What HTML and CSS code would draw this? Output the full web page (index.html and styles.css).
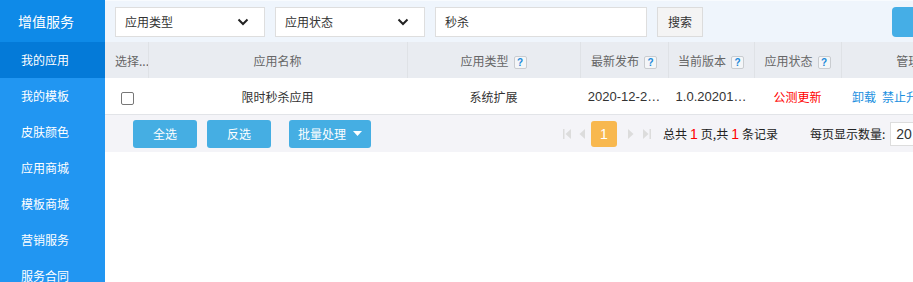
FILE: index.html
```html
<!DOCTYPE html>
<html lang="zh">
<head>
<meta charset="utf-8">
<title>增值服务</title>
<link rel="stylesheet" href="styles.css">
</head>
<body>
<div class="page">
  <aside class="sidebar">
    <div class="side-title">增值服务</div>
    <div class="side-item active">我的应用</div>
    <div class="side-item">我的模板</div>
    <div class="side-item">皮肤颜色</div>
    <div class="side-item">应用商城</div>
    <div class="side-item">模板商城</div>
    <div class="side-item">营销服务</div>
    <div class="side-item">服务合同</div>
  </aside>
  <main class="main">
    <div class="filters">
      <div class="select"><span>应用类型</span><svg class="chev" width="12" height="8" viewBox="0 0 12 8"><path d="M1.5 1.5 L6 6 L10.5 1.5" fill="none" stroke="#222" stroke-width="2"/></svg></div>
      <div class="select"><span>应用状态</span><svg class="chev" width="12" height="8" viewBox="0 0 12 8"><path d="M1.5 1.5 L6 6 L10.5 1.5" fill="none" stroke="#222" stroke-width="2"/></svg></div>
      <div class="search-input">秒杀</div>
      <div class="search-btn">搜索</div>
      <div class="add-btn">添加应用</div>
    </div>
    <table class="grid">
      <colgroup>
        <col class="c-sel"><col class="c-name"><col class="c-type"><col class="c-date"><col class="c-ver"><col class="c-status"><col class="c-manage">
      </colgroup>
      <thead>
        <tr>
          <th class="th-sel">选择...</th>
          <th>应用名称</th>
          <th>应用类型<span class="q">?</span></th>
          <th>最新发布<span class="q">?</span></th>
          <th>当前版本<span class="q">?</span></th>
          <th>应用状态<span class="q">?</span></th>
          <th>管理</th>
        </tr>
      </thead>
      <tbody>
        <tr>
          <td><span class="checkbox"></span></td>
          <td>限时秒杀应用</td>
          <td>系统扩展</td>
          <td class="num">2020-12-2…</td>
          <td class="num">1.0.20201…</td>
          <td class="red">公测更新</td>
          <td class="links"><a>卸载</a><a>禁止升级</a></td>
        </tr>
      </tbody>
    </table>
    <div class="footer">
      <div class="btn">全选</div>
      <div class="btn">反选</div>
      <div class="btn batch">批量处理<svg width="9" height="5" viewBox="0 0 9 5"><path d="M0 0 L9 0 L4.5 5 Z" fill="#fff"/></svg></div>
      <div class="pager">
        <svg class="pi first" width="10" height="12" viewBox="0 0 10 12"><rect x="1" y="1" width="1.5" height="10" fill="#dcdcdc"/><path d="M9 1 L3.5 6 L9 11 Z" fill="#dcdcdc"/></svg>
        <svg class="pi prev" width="8" height="12" viewBox="0 0 8 12"><path d="M7 1 L1.5 6 L7 11 Z" fill="#dcdcdc"/></svg>
        <span class="page-num">1</span>
        <svg class="pi next" width="8" height="12" viewBox="0 0 8 12"><path d="M1 1 L6.5 6 L1 11 Z" fill="#dcdcdc"/></svg>
        <svg class="pi last" width="10" height="12" viewBox="0 0 10 12"><path d="M1 1 L6.5 6 L1 11 Z" fill="#dcdcdc"/><rect x="7.5" y="1" width="1.5" height="10" fill="#dcdcdc"/></svg>
        <span class="total">总共<b>1</b>页,共<b>1</b>条记录</span>
        <span class="per">每页显示数量:</span>
        <span class="per-input">20</span>
      </div>
    </div>
  </main>
</div>
</body>
</html>
```

FILE: styles.css
```css
html, body {
  margin: 0;
  padding: 0;
  overflow: hidden;
  background: #fff;
}
body {
  font-family: "Noto Sans CJK SC", "Liberation Sans", sans-serif;
  font-size: 12px;
  color: #333;
}
.page {
  display: flex;
  width: 1100px;
  min-height: 282px;
}
.sidebar {
  width: 105px;
  flex: none;
  background: #2196f2;
  color: #fff;
  min-height: 300px;
}
.side-title {
  height: 42px;
  line-height: 42px;
  padding-left: 18px;
  font-size: 14px;
  background: #0e8ae8;
}
.side-item {
  height: 36px;
  line-height: 36px;
  padding-left: 21px;
  font-size: 12px;
}
.side-item.active {
  background: #047ad8;
}
.main {
  flex: 1;
  display: flex;
  flex-direction: column;
}
.filters {
  height: 42px;
  box-sizing: border-box;
  border-top: 1px solid #f8fbfe;
  background: #eff5fc;
  display: flex;
  align-items: center;
  padding-left: 10px;
  gap: 10px;
}
.select, .search-input {
  height: 30px;
  box-sizing: border-box;
  background: #fff;
  border: 1px solid #dedede;
  display: flex;
  align-items: center;
  padding-left: 9px;
  color: #333;
}
.select {
  width: 150px;
  justify-content: space-between;
  padding-right: 15px;
}
.chev { flex: none; }
.search-input {
  width: 212px;
}
.search-btn {
  width: 46px;
  height: 30px;
  box-sizing: border-box;
  border: 1px solid #dcdcdc;
  background: #f4f4f4;
  display: flex;
  align-items: center;
  justify-content: center;
  color: #333;
}
.add-btn {
  margin-left: 179px;
  height: 30px;
  width: 90px;
  border-radius: 4px;
  background: #45aee6;
  color: #fff;
  display: flex;
  align-items: center;
  justify-content: center;
}
.grid {
  border-collapse: collapse;
  table-layout: fixed;
  width: 870px;
}
.c-sel { width: 43px; }
.c-name { width: 259px; }
.c-type { width: 173px; }
.c-date { width: 88px; }
.c-ver { width: 86px; }
.c-status { width: 87px; }
.c-manage { width: 134px; }
.grid th {
  height: 36px;
  padding: 0;
  background: #e9ecf1;
  color: #666;
  font-weight: normal;
  text-align: center;
  border-left: 1px solid #dfe2e6;
  white-space: nowrap;
  overflow: hidden;
}
.grid th.th-sel {
  border-left: none;
  text-align: left;
  padding-left: 10px;
}
.q {
  display: inline-block;
  width: 11px;
  height: 11px;
  line-height: 11px;
  margin-left: 5px;
  border: 1px solid #c9ccd0;
  border-radius: 2px;
  background: #f4f6f8;
  color: #1a88d8;
  font-family: "Liberation Sans", sans-serif;
  font-weight: bold;
  font-size: 10px;
  text-align: center;
  vertical-align: 0;
}
.grid td {
  height: 36px;
  padding: 0;
  background: #fff;
  text-align: center;
  border-bottom: 1px solid #e2e4e8;
  white-space: nowrap;
  overflow: hidden;
  color: #333;
}
.grid td.num {
  font-family: "Liberation Sans", sans-serif;
  font-size: 13px;
}
.checkbox {
  display: inline-block;
  width: 11px;
  height: 11px;
  border: 1px solid #777;
  border-radius: 2px;
  vertical-align: middle;
  margin-left: 1px;
}
.grid td.red { color: #f00; }
.grid td.links {
  text-align: left;
  padding-left: 11px;
}
.links a {
  color: #1a8fe0;
  margin-right: 6px;
}
.footer {
  height: 37px;
  background: #f4f4f8;
  display: flex;
  align-items: center;
  padding-left: 28px;
  width: 1000px;
  box-sizing: border-box;
}
.btn {
  width: 64px;
  height: 28px;
  border-radius: 3px;
  background: #45aee3;
  color: #fff;
  display: flex;
  align-items: center;
  justify-content: center;
  margin-right: 10px;
}
.btn.batch {
  width: 82px;
  margin-left: 8px;
  gap: 7px;
}
.pager {
  display: flex;
  align-items: center;
  margin-left: 181px;
}
.pi.first { margin-right: 6px; }
.pi.prev { margin-right: 5px; }
.pi.next { margin-right: 7px; }
.page-num {
  width: 26px;
  height: 26px;
  border-radius: 3px;
  background: #f8b84f;
  color: #fff;
  font-family: "Liberation Sans", sans-serif;
  font-size: 14px;
  display: flex;
  align-items: center;
  justify-content: center;
  margin-right: 10px;
}
.total {
  margin-left: 11px;
  color: #222;
}
.total b {
  font-weight: normal;
  color: #f00;
  font-family: "Liberation Sans", sans-serif;
  font-size: 14px;
  margin: 0 3px;
}
.per {
  margin-left: 32px;
  color: #222;
}
.per-input {
  margin-left: 5px;
  height: 24px;
  width: 40px;
  box-sizing: border-box;
  border: 1px solid #ddd;
  background: #fff;
  padding-left: 5px;
  line-height: 22px;
  font-family: "Liberation Sans", sans-serif;
  font-size: 14px;
}
```
